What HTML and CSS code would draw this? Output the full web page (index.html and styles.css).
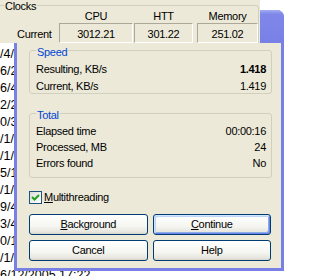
FILE: index.html
```html
<!DOCTYPE html>
<html lang="en">
<head>
    <meta charset="UTF-8">
    <meta name="viewport" content="width=device-width, initial-scale=1.0">
    <title>Benchmark</title>
    <link rel="stylesheet" href="styles.css">
</head>
<body>
<div class="desktop">

    <ul class="log">
        <li>/4/</li>
        <li>6/2</li>
        <li>6/4</li>
        <li>2/2</li>
        <li>0/3</li>
        <li>/1/</li>
        <li>/1/</li>
        <li>5/1</li>
        <li>/1/</li>
        <li>9/4</li>
        <li>3/4</li>
        <li>0/1</li>
        <li>/1/</li>
        <li class="last">6/12/2005 17:22</li>
    </ul>

    <div class="dialog">
        <div class="caption"></div>
        <div class="client">
            <div class="group speed">
                <div class="group-title">Speed</div>
                <div class="rows">
                    <div class="row"><span>Resulting, KB/s</span><b>1.418</b></div>
                    <div class="row"><span>Current, KB/s</span><span>1.419</span></div>
                </div>
            </div>

            <div class="group total">
                <div class="group-title">Total</div>
                <div class="rows">
                    <div class="row"><span>Elapsed time</span><span>00:00:16</span></div>
                    <div class="row"><span>Processed, MB</span><span>24</span></div>
                    <div class="row"><span>Errors found</span><span>No</span></div>
                </div>
            </div>

            <label class="check">
                <span class="check-box">
                    <svg width="11" height="11" viewBox="0 0 11 11"><polyline points="2,5 4.5,7.5 9,3" fill="none" stroke="#21a121" stroke-width="2"/></svg>
                </span>
                <span><u>M</u>ultithreading</span>
            </label>

            <div class="buttons">
                <button class="btn"><u>B</u>ackground</button>
                <button class="btn default"><u>C</u>ontinue</button>
                <button class="btn">Cancel</button>
                <button class="btn">Help</button>
            </div>
        </div>
    </div>

    <div class="clocks">
        <div class="clocks-group">
            <div class="clocks-title">Clocks</div>
            <div class="clock-grid">
                <span></span>
                <span class="head c-cpu">CPU</span>
                <span class="head c-htt">HTT</span>
                <span class="head c-mem">Memory</span>
                <span class="rowhead">Current</span>
                <span class="cell c-cpu">3012.21</span>
                <span class="cell c-htt">301.22</span>
                <span class="cell c-mem">251.02</span>
            </div>
        </div>
    </div>

</div>
</body>
</html>
```

FILE: styles.css
```css
body {
    margin: 0;
    width: 318px;
    height: 276px;
    overflow: hidden;
    background-color: #fff;
    font-family: 'Liberation Sans', Arial, sans-serif;
    font-size: 11px;
    line-height: 13px;
    letter-spacing: -0.3px;
    color: #000;
}

.desktop {
    position: relative;
    width: 318px;
    height: 276px;
}

/* list of the window behind */
.log {
    margin: 0;
    padding: 46px 0 0;
    list-style: none;
    white-space: nowrap;
    font-size: 12.5px;
    line-height: 17px;
    letter-spacing: 0;
}

.log li {
    width: 14px;
    overflow: hidden;
}

.log li.last {
    width: auto;
}

/* the dialog window */
.dialog {
    position: absolute;
    left: 14px;
    top: 10px;
    width: 270px;
    height: 261px;
    box-sizing: border-box;
    padding: 0 3px 3px 3px;
    display: flex;
    flex-direction: column;
    background-color: #7880e6;
    border-radius: 7px 7px 0 0;
}

.caption {
    height: 33px;
    margin: 0 -3px;
    border-radius: 7px 7px 0 0;
    background: linear-gradient(#a3acf2, #7f88e9 4px, #7880e6);
}

.client {
    flex: 1;
    background-color: #ece9d8;
    padding: 7px 9px 0 12px;
    display: flex;
    flex-direction: column;
}

.group {
    border: 1px solid #d0d0bf;
    border-radius: 3px;
    padding: 0 5px 0 6px;
}

.group-title {
    width: max-content;
    margin-top: -5px;
    padding: 0 1px;
    background-color: #ece9d8;
    color: #0046d5;
}

.rows {
    display: flex;
    flex-direction: column;
}

.row {
    display: flex;
    justify-content: space-between;
}

.speed .rows {
    margin-top: 4px;
    gap: 4px;
}

.total {
    margin-top: 19px;
    padding-bottom: 7px;
}

.total .rows {
    margin-top: 3px;
    gap: 3px;
}

.check {
    display: flex;
    align-items: center;
    gap: 2px;
    margin-top: 13px;
    height: 13px;
}

.check-box {
    width: 13px;
    height: 13px;
    box-sizing: border-box;
    border: 1px solid #1c5180;
    background: linear-gradient(135deg, #dcdcd7, #fff);
    display: flex;
}

.buttons {
    display: grid;
    grid-template-columns: 1fr 1fr;
    gap: 5px;
    margin: 10px 1px 0 0;
}

.btn {
    height: 21px;
    padding: 0;
    border: 1px solid #003c74;
    border-radius: 3px;
    background: linear-gradient(#fff, #f5f5f1 60%, #e6e5de 90%, #d8d2c6);
    font: inherit;
    letter-spacing: inherit;
    color: #000;
}

.btn.default {
    box-shadow: inset 1px 1px #cee7ff, inset -1px -1px #6982ee, inset 2px 2px #bcd4f6, inset -2px -2px #89ade4;
}

/* clocks panel lying over the dialog caption */
.clocks {
    position: absolute;
    left: 0;
    top: 0;
    width: 260px;
    height: 43px;
    overflow: hidden;
    background-color: #ece9d8;
}

.clocks-group {
    margin: 5px 0 0 -10px;
    width: 269px;
    height: 60px;
    box-sizing: border-box;
    border: 1px solid #d0d0bf;
    border-radius: 3px;
    padding-left: 9px;
}

.clocks-title {
    width: max-content;
    margin: -6px 0 -3px 4px;
    padding: 0 1px;
    background-color: #ece9d8;
}

.clock-grid {
    display: grid;
    grid-template-columns: 59px 75px 63px 61px;
    grid-template-rows: 13px 20px;
}

.head {
    text-align: center;
}

.rowhead {
    padding: 5px 0 0 17px;
}

.cell {
    box-sizing: border-box;
    height: 20px;
    padding-top: 4px;
    border: 1px solid;
    border-color: #aca899 #fff #fff #aca899;
    text-align: center;
}

.c-cpu { width: 74px; }
.c-htt { width: 59px; }
.c-mem { width: 61px; }
```
